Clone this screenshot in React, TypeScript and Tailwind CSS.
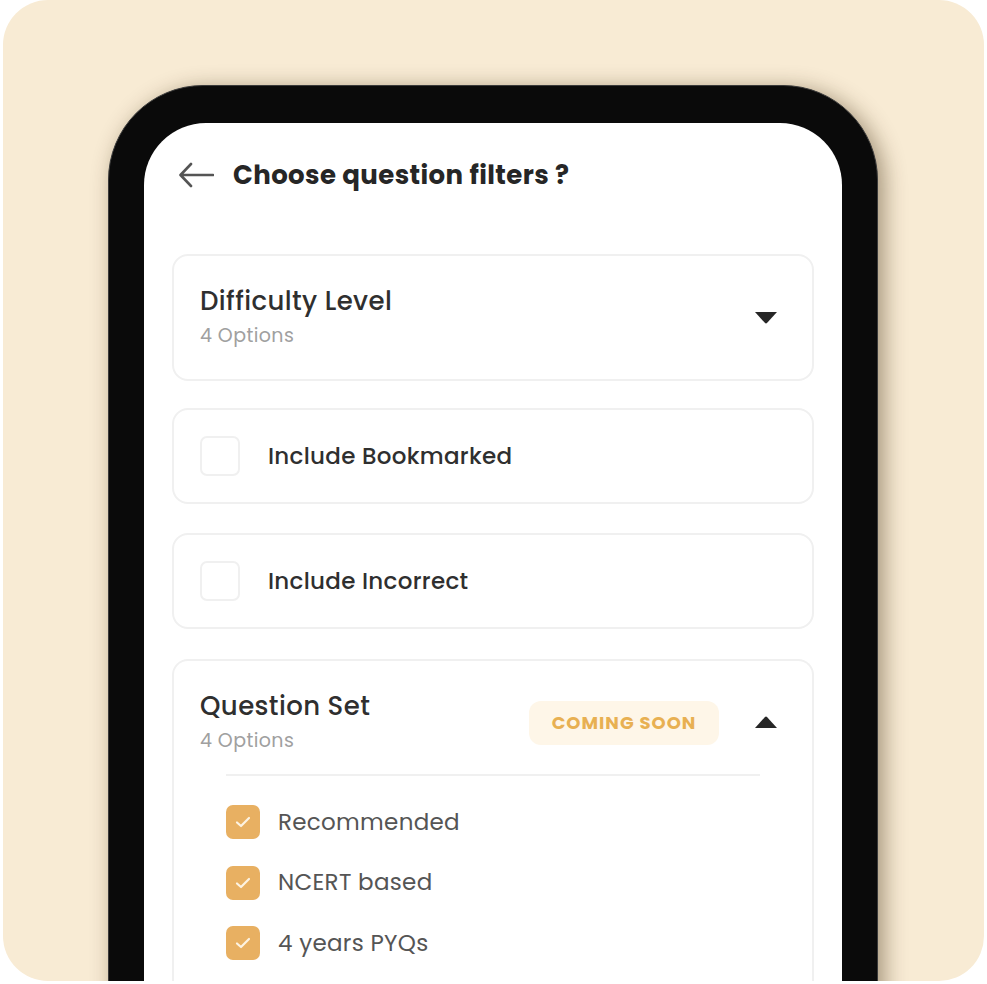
const font = { fontFamily: "Poppins, Inter, 'Noto Sans', sans-serif" };

const Caret = ({ up }: { up?: boolean }) => (
  <svg width="24" height="13" viewBox="0 0 24 13" className={up ? "rotate-180" : ""}>
    <path d="M1 1 H23 L13.2 11.8 Q12 13 10.8 11.8 Z" fill="#262626" />
  </svg>
);

const CheckRow = ({ label }: { label: string }) => (
  <div className="flex items-center gap-[28px] rounded-[16px] border-2 border-[#f0f0f0] bg-white h-[96px] px-[26px]">
    <div className="w-[40px] h-[40px] rounded-[7px] border-2 border-[#f0f0f0]" />
    <span className="text-[23px] font-medium text-[#2f2f2f] tracking-[0.3px]">{label}</span>
  </div>
);

const CheckedItem = ({ label }: { label: string }) => (
  <div className="flex items-center gap-[18px] h-[34px]">
    <div className="w-[34px] h-[34px] rounded-[7px] bg-[#e8b062] flex items-center justify-center">
      <svg width="16" height="12" viewBox="0 0 16 12">
        <path d="M2 6.5 L6 10 L14 2" stroke="#fdf3e2" strokeWidth="2.2" fill="none" strokeLinecap="round" strokeLinejoin="round" />
      </svg>
    </div>
    <span className="text-[23px] text-[#555555] tracking-[0.3px]">{label}</span>
  </div>
);

export default function App() {
  return (
    <div className="w-[987px] h-[984px] bg-white" style={font}>
      <div className="ml-[3px] w-[981px] h-[981px] rounded-[45px] overflow-hidden bg-[#f8ebd4] pl-[105px] pt-[85px]">
        <div className="w-[770px] h-[960px] rounded-t-[95px] bg-[#0a0a0a] px-[35px] pt-[37px] shadow-[6px_4px_22px_rgba(60,40,10,0.45)] border-[1.5px] border-[#3a3a3a]">
          <div className="h-full rounded-t-[62px] bg-white px-[28px]">
            <div className="flex items-center h-[104px] pl-[6px] gap-[19px]">
              <svg width="36" height="26" viewBox="0 0 36 26">
                <path d="M35 13 H3 M13 2 L2.5 13 L13 24" stroke="#555" strokeWidth="2.6" fill="none" strokeLinecap="round" strokeLinejoin="round" />
              </svg>
              <span className="text-[26px] font-bold text-[#262626] tracking-[0.4px]">Choose question filters ?</span>
            </div>

            <div className="mt-[27px] flex items-center justify-between rounded-[16px] border-2 border-[#f0f0f0] h-[127px] pl-[26px] pr-[34px]">
              <div className="flex flex-col">
                <span className="text-[26px] font-medium text-[#2f2f2f] leading-[32px] tracking-[0.4px]">Difficulty Level</span>
                <span className="text-[19px] text-[#a0a0a0] leading-[28px] mt-[5px] tracking-[0.4px]">4 Options</span>
              </div>
              <Caret />
            </div>

            <div className="mt-[27px]">
              <CheckRow label="Include Bookmarked" />
            </div>
            <div className="mt-[29px]">
              <CheckRow label="Include Incorrect" />
            </div>

            <div className="mt-[30px] rounded-t-[16px] border-2 border-b-0 border-[#f0f0f0] h-[400px]">
              <div className="flex items-center justify-between pl-[26px] pr-[34px] pt-[29px]">
                <div className="flex flex-col">
                  <span className="text-[26px] font-medium text-[#2f2f2f] leading-[32px] tracking-[0.4px]">Question Set</span>
                  <span className="text-[19px] text-[#a0a0a0] leading-[28px] mt-[5px] tracking-[0.4px]">4 Options</span>
                </div>
                <div className="flex items-center gap-[35px]">
                  <div className="w-[190px] h-[44px] rounded-[12px] bg-[#fef6e8] flex items-center justify-center text-[18px] font-bold text-[#e8b052] tracking-[1px]">
                    COMING SOON
                  </div>
                  <Caret up />
                </div>
              </div>
              <div className="mx-[52px] mt-[19px] h-[2px] bg-[#f0f0f0]" />
              <div className="flex flex-col gap-[26.5px] pl-[52px] pt-[29px]">
                <CheckedItem label="Recommended" />
                <CheckedItem label="NCERT based" />
                <CheckedItem label="4 years PYQs" />
              </div>
            </div>
          </div>
        </div>
      </div>
    </div>
  );
}
